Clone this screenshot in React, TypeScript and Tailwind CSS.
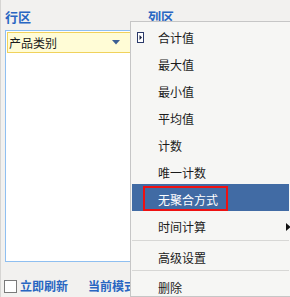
const items = ["合计值", "最大值", "最小值", "平均值", "计数", "唯一计数"];

function MenuRow({ label, first }: { label: string; first?: boolean }) {
  return (
    <div className="relative flex h-[27px] items-center pl-[26px] pt-[5px] text-[12px] text-[#1b1b1b]">
      {first && (
        <svg className="absolute left-[5px] top-[10px]" width="7" height="11" viewBox="0 0 7 11">
          <rect x="0.5" y="0.5" width="6" height="10" fill="#fff" stroke="#2b3a6a" />
          <path d="M2.5 3 L5 5.5 L2.5 8 Z" fill="#1b2440" />
        </svg>
      )}
      {label}
    </div>
  );
}

export default function App() {
  return (
    <div
      className="relative h-[297px] w-[290px] overflow-hidden border-l border-[#d6d5d3] bg-[#f2f1ef]"
      style={{ fontFamily: '"Noto Sans CJK SC", "Noto Sans", sans-serif' }}
    >
      <div className="flex flex-col pl-[4px]">
        <div className="grid h-[30px] grid-cols-[143px_1fr] pt-[9px] text-[13px] font-bold leading-[16px] text-[#2866c2]">
          <span>行区</span>
          <span>列区</span>
        </div>
        <div className="h-[232px] w-[142px] border border-[#8fbff0] bg-white p-[1px]">
          <div className="flex h-[21px] items-center justify-between border border-[#f0d25c] bg-[#fffcd6] pl-[1px] pr-[24px] text-[12px] text-[#1b1b1b]">
            <span>产品类别</span>
            <svg width="8" height="5" viewBox="0 0 8 5">
              <path d="M0 0 H8 L4 4.5 Z" fill="#3c5f93" />
            </svg>
          </div>
        </div>
        <div className="mt-[15px] flex items-center text-[12px] font-bold text-[#2866c2]">
          <span className="h-[13px] w-[13px] -ml-[1px] border border-[#7a7a7a] bg-white" />
          <span className="ml-[3px]">立即刷新</span>
          <span className="ml-[20px]">当前模式</span>
        </div>
      </div>

      <div className="absolute left-[129px] top-[21px] bottom-0 w-[161px] border border-[#c6c6c6] bg-[#f6f6f4] p-[1px]">
        <div className="-mt-[1px]">
          {items.map((l, i) => (
            <MenuRow key={l} label={l} first={i === 0} />
          ))}
          <div className="flex h-[27px] items-center bg-[#416ba4] pl-[11px] text-[12px] text-white">
            <span className="mt-[2px] flex h-[25px] items-center border-2 border-[#ee1111] pl-[13px] pr-[8px] pt-[2px]">
              无聚合方式
            </span>
          </div>
          <div className="relative">
            <MenuRow label="时间计算" />
            <svg className="absolute right-[-2px] top-[12px]" width="5" height="8" viewBox="0 0 5 8">
              <path d="M0 0 L4.5 4 L0 8 Z" fill="#111" />
            </svg>
          </div>
          <div className="my-[2px] h-[1px] bg-[#d7d7d5]" />
          <div className="-mt-[1px]">
            <MenuRow label="高级设置" />
          </div>
          <div className="my-[1px] h-[1px] bg-[#d7d7d5]" />
          <MenuRow label="删除" />
        </div>
      </div>
    </div>
  );
}
